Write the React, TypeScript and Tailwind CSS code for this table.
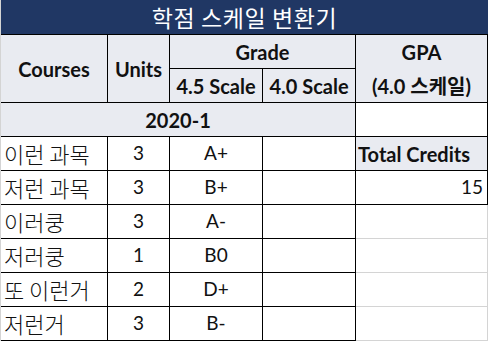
import React from 'react'

const head = "font-['Lato','Noto_Sans_CJK_KR',sans-serif] font-bold text-[20px] text-[#111]"
const kor = "font-['Noto_Sans_CJK_KR',sans-serif] font-light text-[22px] text-[#111]"
const num = "font-['Lato','Noto_Sans_CJK_KR',sans-serif] text-[19px] text-[#111]"

const courses = [
  { name: '이런 과목', units: 3, grade: 'A+' },
  { name: '저런 과목', units: 3, grade: 'B+' },
  { name: '이러쿵', units: 3, grade: 'A-' },
  { name: '저러쿵', units: 1, grade: 'B0' },
  { name: '또 이런거', units: 2, grade: 'D+' },
  { name: '저런거', units: 3, grade: 'B-' },
]

// right column next to each course row
function SideCell({ i }: { i: number }): JSX.Element {
  if (i === 0)
    return (
      <div className={`flex items-center border-r border-b border-black bg-[#e9ebf1] pl-[2px] ${head}`}>
        Total Credits
      </div>
    )
  if (i === 1)
    return (
      <div className={`flex items-center justify-end border-r border-b border-black pr-[4px] ${num}`}>15</div>
    )
  return <div className="border-r border-b border-[#d4d4d4]" />
}

export default function App(): JSX.Element {
  return (
    <div className="h-[341px] w-[488px] overflow-hidden bg-white">
      <div className="grid grid-cols-[107px_62px_93px_93px_132px] grid-rows-[35px_repeat(9,34px)] border-l border-[#d4d4d4]">
        {/* Title */}
        <div className="col-span-5 border-b border-black bg-[#203764] text-center font-['Noto_Sans_CJK_KR',sans-serif] text-[23px] leading-[34px] tracking-[0.6px] text-white">
          학점 스케일 변환기
        </div>

        {/* Header */}
        <div className={`row-span-2 flex items-center justify-center border-r border-b border-black bg-[#e9ebf1] ${head}`}>
          Courses
        </div>
        <div className={`row-span-2 flex items-center justify-center border-r border-b border-black bg-[#e9ebf1] ${head}`}>
          Units
        </div>
        <div className={`col-span-2 flex items-center justify-center border-r border-b border-black bg-[#e9ebf1] ${head}`}>
          Grade
        </div>
        <div className={`row-span-2 flex flex-col items-center justify-center gap-[8px] border-r border-b border-black bg-[#e9ebf1] leading-[26px] ${head}`}>
          <span>GPA</span>
          <span>(4.0 스케일)</span>
        </div>
        <div className={`flex items-center justify-center border-r border-b border-black bg-[#e9ebf1] ${head}`}>
          4.5 Scale
        </div>
        <div className={`flex items-center justify-center border-r border-b border-black bg-[#e9ebf1] ${head}`}>
          4.0 Scale
        </div>

        {/* Semester */}
        <div className={`col-span-4 flex items-center justify-center border-r border-b border-black bg-[#e9ebf1] ${head}`}>
          2020-1
        </div>
        <div className="border-r border-b border-black" />

        {/* Rows */}
        {courses.map((c, i) => (
          <React.Fragment key={i}>
            <div className={`flex items-center border-r border-b border-black pl-[3px] ${kor}`}>{c.name}</div>
            <div className={`flex items-center justify-center border-r border-b border-black ${num}`}>{c.units}</div>
            <div className={`flex items-center justify-center border-r border-b border-black ${num}`}>{c.grade}</div>
            <div className="border-r border-b border-black" />
            <SideCell i={i} />
          </React.Fragment>
        ))}
      </div>
    </div>
  )
}
